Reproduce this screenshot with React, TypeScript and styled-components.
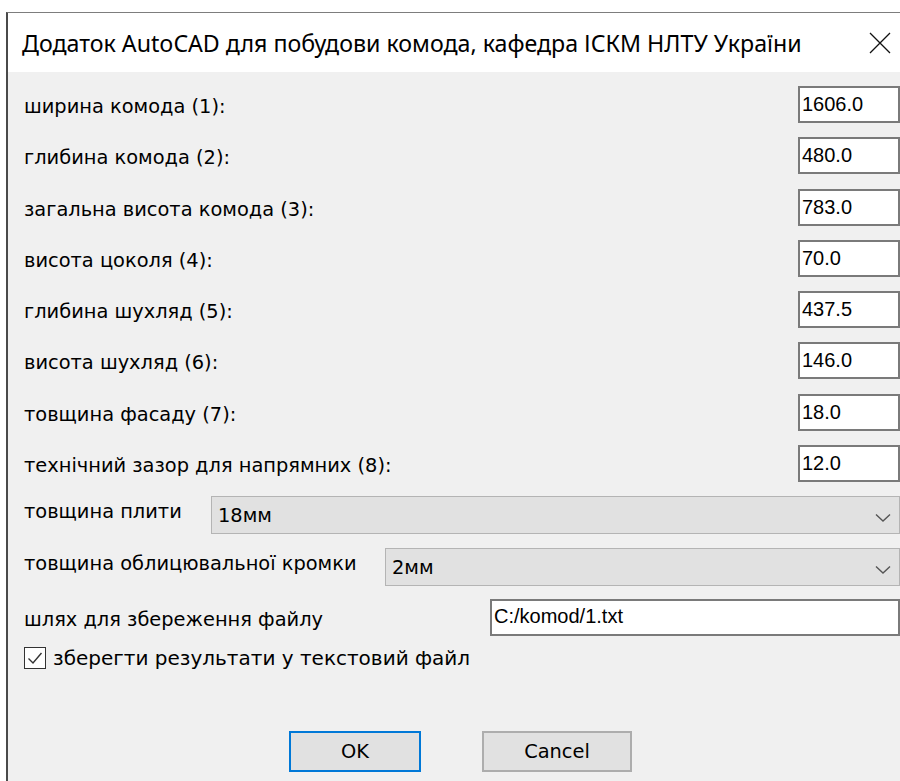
import styled, { createGlobalStyle } from 'styled-components';

const GlobalStyle = createGlobalStyle`
  html, body {
    margin: 0;
    padding: 0;
    background: #ffffff;
    overflow: hidden;
  }
`;

const Window = styled.div`
  margin: 12px 0 0 6px;
  height: 769px;
  border-left: 2px solid #4a4a4a;
  border-top: 1px solid #7d7d7d;
  background: #f0f0f0;
  display: flex;
  flex-direction: column;
  overflow: hidden;
`;

const TitleBar = styled.div`
  flex-shrink: 0;
  height: 59px;
  background: #ffffff;
  display: flex;
  align-items: center;
  justify-content: space-between;
  padding: 0 9px 0 14px;
  font-family: 'Noto Sans', sans-serif;
  font-size: 23.2px;
  color: #000;
`;

const CloseIcon = () => (
  <svg width="22" height="22" viewBox="0 0 22 22">
    <path d="M1 1 L21 21 M21 1 L1 21" stroke="#111" strokeWidth="1.3" fill="none" />
  </svg>
);

const Body = styled.div`
  flex: 1;
  padding: 14px 0 0 16px;
  font-family: 'DejaVu Sans', sans-serif;
  font-size: 19.4px;
  color: #000;
  display: flex;
  flex-direction: column;
`;

const Fields = styled.div`
  display: grid;
  grid-template-columns: 1fr 102px;
  row-gap: 14.3px;
  align-items: center;
`;

const Label = styled.div`
  height: 37px;
  box-sizing: border-box;
  padding-top: 4px;
  line-height: 33px;
`;

const NumBox = styled.div`
  height: 37px;
  box-sizing: border-box;
  border: 2px solid #7a7a7a;
  background: #fff;
  font-family: 'Liberation Sans', Arial, sans-serif;
  font-size: 20px;
  padding: 5px 0 0 2px;
  line-height: 22px;
`;

const Row = styled.div<{ $top: number; $labelWidth: number }>`
  display: flex;
  margin-top: ${(p) => p.$top}px;
  align-items: flex-start;
  & > :first-child {
    width: ${(p) => p.$labelWidth}px;
    flex-shrink: 0;
  }
`;

const RowLabel = styled.div<{ $pad: number }>`
  padding-top: ${(p) => p.$pad}px;
  white-space: nowrap;
`;

const Combo = styled.div`
  flex: 1;
  height: 38px;
  box-sizing: border-box;
  border: 1px solid #b4b4b4;
  background: #e1e1e1;
  display: flex;
  align-items: flex-end;
  justify-content: space-between;
  padding: 0 8px 6px 6px;
`;

const Chevron = () => (
  <svg width="16" height="10" viewBox="0 0 16 10" style={{ marginBottom: 4 }}>
    <path d="M1 1.5 L8 8 L15 1.5" stroke="#555" strokeWidth="1.4" fill="none" />
  </svg>
);

const PathBox = styled.div`
  flex: 1;
  height: 37px;
  box-sizing: border-box;
  border: 2px solid #7a7a7a;
  background: #fff;
  font-family: 'Liberation Sans', Arial, sans-serif;
  font-size: 20px;
  padding: 4px 0 0 2px;
  line-height: 22px;
`;

const CheckRow = styled.div`
  display: flex;
  align-items: center;
  gap: 7px;
  margin-top: 10px;
  font-size: 20px;
`;

const CheckBox = styled.div`
  width: 22px;
  height: 22px;
  box-sizing: border-box;
  border: 1px solid #333;
  background: #fff;
  display: flex;
  align-items: center;
  justify-content: center;
`;

const Buttons = styled.div`
  display: flex;
  margin-top: 61px;
  padding-left: 265px;
  gap: 61px;
`;

const Button = styled.div<{ $primary?: boolean; $w: number }>`
  width: ${(p) => p.$w}px;
  height: 41px;
  box-sizing: border-box;
  border: 2px solid ${(p) => (p.$primary ? '#0078d7' : '#adadad')};
  background: #e1e1e1;
  display: flex;
  align-items: center;
  justify-content: center;
`;

const dims = [
  ['ширина комода (1):', '1606.0'],
  ['глибина комода (2):', '480.0'],
  ['загальна висота комода (3):', '783.0'],
  ['висота цоколя (4):', '70.0'],
  ['глибина шухляд (5):', '437.5'],
  ['висота шухляд (6):', '146.0'],
  ['товщина фасаду (7):', '18.0'],
  ['технічний зазор для напрямних (8):', '12.0'],
];

export default function App() {
  return (
    <>
      <GlobalStyle />
      <Window>
        <TitleBar>
          <span>Додаток AutoCAD для побудови комода, кафедра ІСКМ НЛТУ України</span>
          <CloseIcon />
        </TitleBar>
        <Body>
          <Fields>
            {dims.map(([label, value]) => (
              <>
                <Label key={label}>{label}</Label>
                <NumBox>{value}</NumBox>
              </>
            ))}
          </Fields>
          <Row $top={14} $labelWidth={187}>
            <RowLabel $pad={4}>товщина плити</RowLabel>
            <Combo>
              <span>18мм</span>
              <Chevron />
            </Combo>
          </Row>
          <Row $top={14} $labelWidth={361}>
            <RowLabel $pad={4}>товщина облицювальної кромки</RowLabel>
            <Combo>
              <span>2мм</span>
              <Chevron />
            </Combo>
          </Row>
          <Row $top={13} $labelWidth={466}>
            <RowLabel $pad={9}>шлях для збереження файлу</RowLabel>
            <PathBox>C:/komod/1.txt</PathBox>
          </Row>
          <CheckRow>
            <CheckBox>
              <svg width="16" height="14" viewBox="0 0 16 14">
                <path d="M1.5 7.5 L6 12 L14.5 2" stroke="#333" strokeWidth="1.4" fill="none" />
              </svg>
            </CheckBox>
            <span>зберегти результати у текстовий файл</span>
          </CheckRow>
          <Buttons>
            <Button $primary $w={132}>OK</Button>
            <Button $w={150}>Cancel</Button>
          </Buttons>
        </Body>
      </Window>
    </>
  );
}
